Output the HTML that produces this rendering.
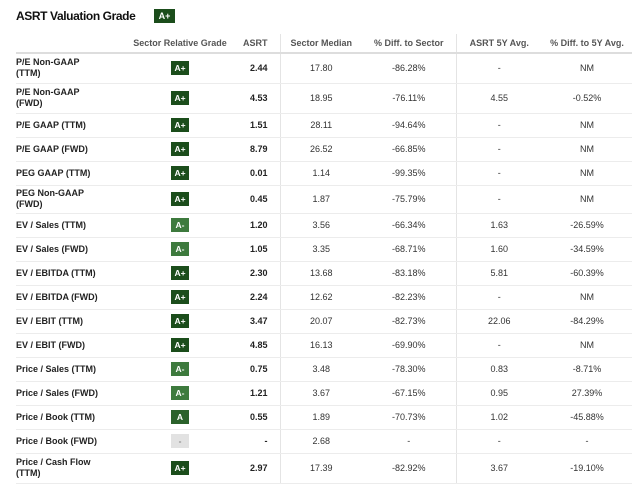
<!DOCTYPE html>
<html><head><style>
body{margin:0;background:#fff;font-family:"Liberation Sans",sans-serif;color:#222;}
h1{position:absolute;left:16px;top:9px;margin:0;font-size:12px;letter-spacing:-0.4px;font-weight:bold;color:#111;}
.tb{position:absolute;left:154px;top:9px;width:21px;height:14px;background:#1b4d1b;color:#fff;font-size:9px;font-weight:bold;text-align:center;line-height:14px;}
table{position:absolute;left:16px;top:34px;width:616px;border-collapse:collapse;font-size:9px;}
th{font-weight:bold;color:#555;height:18px;border-bottom:2px solid #ddd;padding:0;}
td{border-bottom:1px solid #ececec;padding:0;text-align:center;color:#333;}
td.l{text-align:left;font-weight:bold;color:#222;line-height:11px;}
td.a{text-align:right;font-weight:bold;padding-right:12px;color:#222;}
.sep{border-right:1px solid #e4e4e4;}
.b{display:inline-block;width:18px;height:14px;line-height:14px;color:#fff;font-size:8.5px;font-weight:bold;background:#1b4d1b;}
.m{background:#3d7a3d}.n{background:#2a612a}.g{background:#e2e2e2;color:#888}
tr.t{height:30px}tr.s{height:24px}
</style></head><body>
<h1>ASRT Valuation Grade</h1><div class="tb">A+</div>
<table>
<colgroup><col style="width:114px"><col style="width:100px"><col style="width:50px"><col style="width:82px"><col style="width:94px"><col style="width:86px"><col style="width:90px"></colgroup>
<tr><th></th><th>Sector Relative Grade</th><th class="sep" style="text-align:right;padding-right:12px">ASRT</th><th>Sector Median</th><th class="sep">% Diff. to Sector</th><th>ASRT 5Y Avg.</th><th>% Diff. to 5Y Avg.</th></tr>
<tr class="t"><td class="l">P/E Non-GAAP<br>(TTM)</td><td><span class="b">A+</span></td><td class="a sep">2.44</td><td>17.80</td><td class="sep">-86.28%</td><td>-</td><td>NM</td></tr>
<tr class="t"><td class="l">P/E Non-GAAP<br>(FWD)</td><td><span class="b">A+</span></td><td class="a sep">4.53</td><td>18.95</td><td class="sep">-76.11%</td><td>4.55</td><td>-0.52%</td></tr>
<tr class="s"><td class="l">P/E GAAP (TTM)</td><td><span class="b">A+</span></td><td class="a sep">1.51</td><td>28.11</td><td class="sep">-94.64%</td><td>-</td><td>NM</td></tr>
<tr class="s"><td class="l">P/E GAAP (FWD)</td><td><span class="b">A+</span></td><td class="a sep">8.79</td><td>26.52</td><td class="sep">-66.85%</td><td>-</td><td>NM</td></tr>
<tr class="s"><td class="l">PEG GAAP (TTM)</td><td><span class="b">A+</span></td><td class="a sep">0.01</td><td>1.14</td><td class="sep">-99.35%</td><td>-</td><td>NM</td></tr>
<tr style="height:28px"><td class="l">PEG Non-GAAP<br>(FWD)</td><td><span class="b">A+</span></td><td class="a sep">0.45</td><td>1.87</td><td class="sep">-75.79%</td><td>-</td><td>NM</td></tr>
<tr class="s"><td class="l">EV / Sales (TTM)</td><td><span class="b m">A-</span></td><td class="a sep">1.20</td><td>3.56</td><td class="sep">-66.34%</td><td>1.63</td><td>-26.59%</td></tr>
<tr class="s"><td class="l">EV / Sales (FWD)</td><td><span class="b m">A-</span></td><td class="a sep">1.05</td><td>3.35</td><td class="sep">-68.71%</td><td>1.60</td><td>-34.59%</td></tr>
<tr class="s"><td class="l">EV / EBITDA (TTM)</td><td><span class="b">A+</span></td><td class="a sep">2.30</td><td>13.68</td><td class="sep">-83.18%</td><td>5.81</td><td>-60.39%</td></tr>
<tr class="s"><td class="l">EV / EBITDA (FWD)</td><td><span class="b">A+</span></td><td class="a sep">2.24</td><td>12.62</td><td class="sep">-82.23%</td><td>-</td><td>NM</td></tr>
<tr class="s"><td class="l">EV / EBIT (TTM)</td><td><span class="b">A+</span></td><td class="a sep">3.47</td><td>20.07</td><td class="sep">-82.73%</td><td>22.06</td><td>-84.29%</td></tr>
<tr class="s"><td class="l">EV / EBIT (FWD)</td><td><span class="b">A+</span></td><td class="a sep">4.85</td><td>16.13</td><td class="sep">-69.90%</td><td>-</td><td>NM</td></tr>
<tr class="s"><td class="l">Price / Sales (TTM)</td><td><span class="b m">A-</span></td><td class="a sep">0.75</td><td>3.48</td><td class="sep">-78.30%</td><td>0.83</td><td>-8.71%</td></tr>
<tr class="s"><td class="l">Price / Sales (FWD)</td><td><span class="b m">A-</span></td><td class="a sep">1.21</td><td>3.67</td><td class="sep">-67.15%</td><td>0.95</td><td>27.39%</td></tr>
<tr class="s"><td class="l">Price / Book (TTM)</td><td><span class="b n">A</span></td><td class="a sep">0.55</td><td>1.89</td><td class="sep">-70.73%</td><td>1.02</td><td>-45.88%</td></tr>
<tr class="s"><td class="l">Price / Book (FWD)</td><td><span class="b g">-</span></td><td class="a sep">-</td><td>2.68</td><td class="sep">-</td><td>-</td><td>-</td></tr>
<tr class="t"><td class="l">Price / Cash Flow<br>(TTM)</td><td><span class="b">A+</span></td><td class="a sep">2.97</td><td>17.39</td><td class="sep">-82.92%</td><td>3.67</td><td>-19.10%</td></tr>
</table>
</body></html>
